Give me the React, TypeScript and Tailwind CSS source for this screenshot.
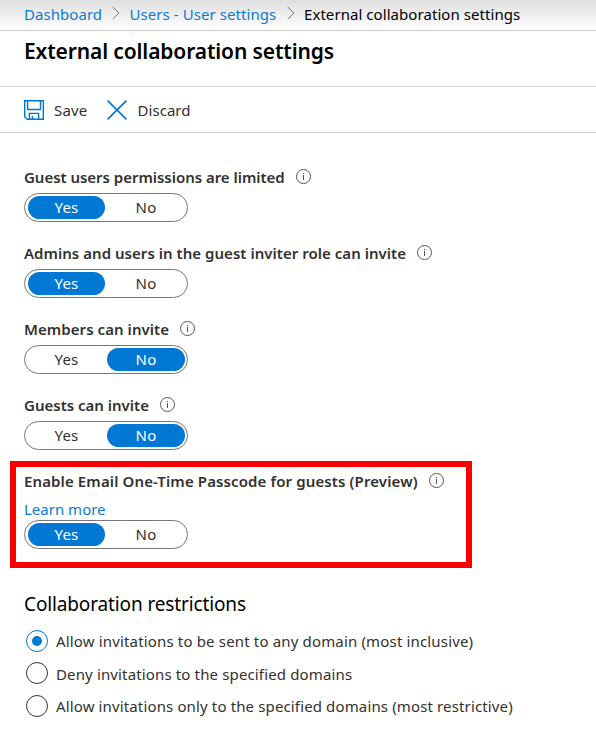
import type { ReactNode } from "react";

function Chevron() {
  return (
    <svg className="mb-0.5 h-[14px] w-2 shrink-0" viewBox="0 0 8 14" fill="none" stroke="#777" strokeWidth="1">
      <path d="M.8 1 L7 7 L.8 13" />
    </svg>
  );
}

function SaveIcon() {
  return (
    <svg className="size-5 shrink-0" viewBox="0 0 20 20" fill="none" stroke="#0078d4" strokeWidth="1.4">
      <path d="M.7 .7 H19.3 V19.3 H3.2 L.7 16.8 Z" />
      <path d="M3.6 .7 V9.5 H16.5 V.7" />
      <path d="M5.4 19.3 V13.4 H14.6 V19.3" />
      <path d="M8.4 19.3 V16" />
    </svg>
  );
}

function DiscardIcon() {
  return (
    <svg className="size-5 shrink-0" viewBox="0 0 20 20" fill="none" stroke="#0078d4" strokeWidth="1.6">
      <path d="M.6 .6 L19.4 19.4 M19.4 .6 L.6 19.4" />
    </svg>
  );
}

function InfoIcon() {
  return (
    <svg className="mb-px size-[15px] shrink-0" viewBox="0 0 15 15" fill="none" stroke="#555">
      <circle cx="7.5" cy="7.5" r="7" />
      <path d="M7.5 6 V11 M7.5 4 V5" />
    </svg>
  );
}

function Label({ width, children }: { width: string; children: ReactNode }) {
  return (
    <div className="flex h-5 items-center whitespace-nowrap font-semibold">
      <span className={width}>{children}</span>
      <InfoIcon />
    </div>
  );
}

function Toggle({ value }: { value: "Yes" | "No" }) {
  return (
    <div className="flex h-[29px] w-[164px] gap-0.5 rounded-full border border-[#777] py-0.5 pr-0.5 pl-[3px] text-center leading-[23px] tracking-[0.2px]">
      <div className={value === "Yes" ? "w-[77px] rounded-full bg-[#0078d4] text-white" : "w-[77px]"}>Yes</div>
      <div className={value === "No" ? "w-[78px] rounded-full bg-[#0078d4] text-white" : "w-[78px]"}>No</div>
    </div>
  );
}

function Radio({ checked = false, className, children }: { checked?: boolean; className: string; children: ReactNode }) {
  return (
    <div className="flex h-[22px] items-center gap-2 whitespace-nowrap">
      <span
        className={
          checked
            ? "flex size-[22px] items-center justify-center rounded-full border border-[#0078d4]"
            : "size-[22px] rounded-full border border-[#333]"
        }
      >
        {checked && <span className="size-2.5 rounded-full bg-[#0078d4]" />}
      </span>
      <span className={className}>{children}</span>
    </div>
  );
}

export default function App() {
  return (
    <div className="h-[749px] w-[596px] overflow-hidden bg-white font-['Noto_Sans',sans-serif] text-[15px] leading-5 text-[#323130]">
      <nav className="flex h-[31px] items-center border-b border-[#ccc] bg-linear-to-b from-[#dfdfdf] to-white pb-0.5 pl-6 whitespace-nowrap">
        <a className="w-[79px] tracking-[0.05px] text-[#0f7ad4]">Dashboard</a>
        <span className="flex w-[26.5px] justify-center"><Chevron /></span>
        <a className="w-[148px] tracking-[0.07px] text-[#0f7ad4]">Users - User settings</a>
        <span className="flex w-[26.5px] justify-center"><Chevron /></span>
        <span className="tracking-[0.06px] text-black">External collaboration settings</span>
      </nav>

      <header className="h-14 border-b border-[#d2d2d2] pt-[6px] pl-6">
        <h1 className="text-[21px] leading-7 font-semibold tracking-[-0.13px] whitespace-nowrap text-black">
          External collaboration settings
        </h1>
      </header>

      <div className="flex h-[46px] items-center border-b border-[#d2d2d2] pl-6">
        <SaveIcon />
        <span className="ml-2.5 w-[53px] tracking-[0.2px]">Save</span>
        <DiscardIcon />
        <span className="ml-[10.5px] tracking-[0.05px]">Discard</span>
      </div>

      <div className="flex flex-col gap-[21px] pt-[34px] pl-6">
        <div className="flex flex-col gap-1.5">
          <Label width="w-[272px] tracking-[-0.03px]">Guest users permissions are limited</Label>
          <Toggle value="Yes" />
        </div>
        <div className="flex flex-col gap-1.5">
          <Label width="w-[393px] tracking-[0.035px]">Admins and users in the guest inviter role can invite</Label>
          <Toggle value="Yes" />
        </div>
        <div className="flex flex-col gap-1.5">
          <Label width="w-[156px] tracking-[0.06px]">Members can invite</Label>
          <Toggle value="No" />
        </div>
        <div className="flex flex-col gap-1.5">
          <Label width="w-[136px]">Guests can invite</Label>
          <Toggle value="No" />
        </div>
      </div>

      <section className="mt-[11px] ml-2.5 h-[107px] w-[462px] border-6 border-[#fb0000] pt-1 pl-2">
        <Label width="w-[405px] tracking-[0.12px]">Enable Email One-Time Passcode for guests (Preview)</Label>
        <a className="mt-2 mb-px block text-[#0f7ad4]">Learn more</a>
        <Toggle value="Yes" />
      </section>

      <section className="pt-6 pl-6">
        <h2 className="text-[19px] leading-6 tracking-[-0.13px] text-black">Collaboration restrictions</h2>
        <div className="flex flex-col pt-[14px] pl-0.5">
          <Radio checked className="tracking-[0.16px]">Allow invitations to be sent to any domain (most inclusive)</Radio>
          <div className="mt-2.5 mb-[11px]">
            <Radio className="pt-0.5 tracking-[0.14px]">Deny invitations to the specified domains</Radio>
          </div>
          <Radio className="tracking-[0.135px]">Allow invitations only to the specified domains (most restrictive)</Radio>
        </div>
      </section>
    </div>
  );
}
